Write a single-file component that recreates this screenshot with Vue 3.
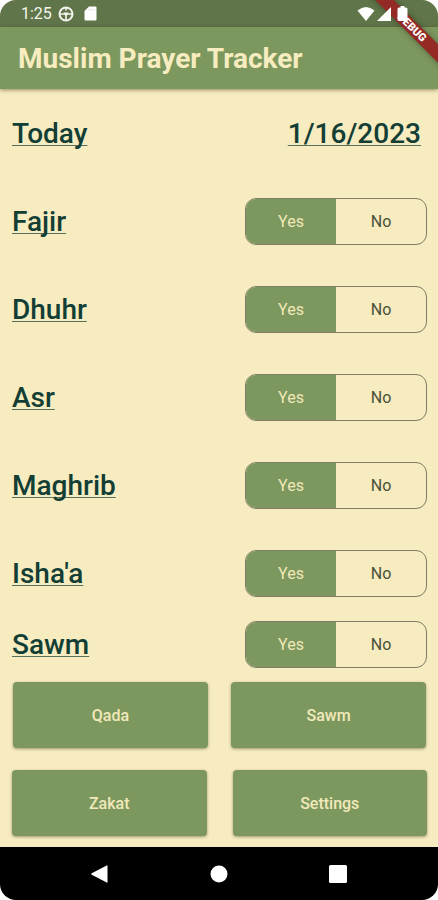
<script setup>
import { reactive } from 'vue'

const prayers = reactive([
  { name: 'Fajir', done: true },
  { name: 'Dhuhr', done: true },
  { name: 'Asr', done: true },
  { name: 'Maghrib', done: true },
  { name: "Isha'a", done: true },
  { name: 'Sawm', done: true }
])
</script>

<template>
  <div class="phone">
    <div class="status">
      <div class="status-left">
        <span class="time">1:25</span>
        <svg class="icon" width="16" height="16" viewBox="0 0 16 16" aria-hidden="true">
          <circle cx="8" cy="8" r="6.500" fill="none" stroke="#f3f5ee" stroke-width="2" />
          <path d="M2 8h12M8 8v6M8 2v2.500" fill="none" stroke="#f3f5ee" stroke-width="1.600" />
          <path d="M5.500 6.500h5L9 9.500H7z" fill="#f3f5ee" />
        </svg>
        <svg class="icon" width="13" height="15" viewBox="0 0 13 15" aria-hidden="true">
          <path d="M5 .5h6.500q1 0 1 1v12q0 1-1 1h-10q-1 0-1-1V5z" fill="#fff" />
          <path d="M5 2.800v1.600M7.500 2.800v1.600M10 2.800v1.600" stroke="#d3dac8" stroke-width="1" />
        </svg>
      </div>
      <div class="status-right">
        <svg width="18" height="16" viewBox="0 0 18 16" aria-hidden="true">
          <path d="M.5 4.600Q9-2.600 17.500 4.600L9 15z" fill="#fff" />
        </svg>
        <svg width="14" height="16" viewBox="0 0 14 16" aria-hidden="true">
          <path d="M14 1v14H0z" fill="#fff" />
        </svg>
        <svg class="battery" width="11" height="16" viewBox="0 0 11 16" aria-hidden="true">
          <path d="M3.500 0h4v1.600H9q1.500 0 1.500 1.500v10.400q0 1.500-1.500 1.500H2q-1.500 0-1.500-1.500V3.100q0-1.500 1.500-1.500h1.500z" fill="#fff" />
        </svg>
      </div>
    </div>
    <div class="ribbon-corner" aria-hidden="true"><span class="ribbon">DEBUG</span></div>

    <header class="appbar"><h1>Muslim Prayer Tracker</h1></header>

    <main class="content">
      <div class="row">
        <h2 class="label">Today</h2>
        <span class="label date">1/16/2023</span>
      </div>
      <div v-for="p in prayers" :key="p.name" class="row">
        <h2 class="label">{{ p.name }}</h2>
        <div class="toggle" role="group" :aria-label="p.name">
          <button type="button" :class="{ on: p.done }" :aria-pressed="p.done" @click="p.done = true">Yes</button>
          <button type="button" :class="{ on: !p.done }" :aria-pressed="!p.done" @click="p.done = false">No</button>
        </div>
      </div>
      <div class="actions inset">
        <button type="button">Qada</button>
        <button type="button">Sawm</button>
      </div>
      <div class="actions">
        <button type="button">Zakat</button>
        <button type="button">Settings</button>
      </div>
    </main>

    <nav class="navbar">
      <button type="button" aria-label="Back">
        <svg width="20" height="20" viewBox="0 0 20 20"><path d="M17.500 1.800v16.400q0 .8-.8.400L1.700 10.700q-1-.7 0-1.400L16.700 1.400q.8-.4.8.4z" fill="#fff" /></svg>
      </button>
      <button type="button" aria-label="Home">
        <svg width="20" height="20" viewBox="0 0 20 20"><circle cx="10" cy="10" r="8.500" fill="#fff" /></svg>
      </button>
      <button type="button" aria-label="Recent apps">
        <svg width="20" height="20" viewBox="0 0 20 20"><rect x="1" y="1" width="18" height="18" rx="1.500" fill="#fff" /></svg>
      </button>
    </nav>
  </div>
</template>

<style>
body {
  margin: 0;
  background: #fff;
}
</style>

<style scoped>
.phone {
  position: relative;
  display: flex;
  flex-direction: column;
  min-height: 100vh;
  overflow: hidden;
  border-radius: 16px;
  background: #f7ecbf;
  font-family: Roboto, sans-serif;
}
button {
  margin: 0;
  padding: 0;
  border: 0;
  background: none;
  font-family: inherit;
  cursor: pointer;
}
.status {
  display: flex;
  justify-content: space-between;
  align-items: center;
  height: 27px;
  padding: 0 30px 0 21px;
  background: #607549;
}
.status-left,
.status-right {
  display: flex;
  align-items: center;
}
.time {
  margin-right: 6px;
  color: #f3f5ee;
  font-size: 16px;
}
.icon {
  margin-right: 10px;
}
.status-right {
  position: relative;
  z-index: 3;
  gap: 2px;
}
.battery {
  margin-left: 4px;
}
.ribbon-corner {
  position: absolute;
  z-index: 2;
  top: 0;
  right: 0;
  width: 90px;
  height: 90px;
  overflow: hidden;
  pointer-events: none;
}
.ribbon {
  position: absolute;
  top: 21px;
  right: -44px;
  width: 140px;
  height: 13px;
  background: #932a26;
  box-shadow: 0 0 6px rgba(0, 0, 0, 0.35);
  color: #fff;
  font-size: 11px;
  font-weight: 900;
  line-height: 13px;
  text-align: center;
  transform: rotate(45deg);
}
.appbar {
  position: relative;
  display: flex;
  align-items: center;
  height: 62px;
  padding: 0 18px;
  background: #7d985e;
  box-shadow: 0 1px 4px rgba(70, 60, 20, 0.55);
}
h1 {
  margin: 0;
  color: #f7ecbf;
  font-size: 28px;
  font-weight: 700;
}
.content {
  flex: 1;
  padding: 0 11px 11px 12px;
}
.row {
  display: flex;
  justify-content: space-between;
  align-items: center;
  height: 88px;
}
.row:nth-child(7) {
  height: 54px;
}
.label {
  margin: 0;
  color: #123e35;
  font-size: 28px;
  font-weight: 500;
  text-decoration: underline;
  text-decoration-color: #56705a;
  text-decoration-thickness: 1px;
  text-underline-offset: 2px;
  text-decoration-skip-ink: none;
}
.date {
  margin-right: 6px;
}
.toggle {
  display: flex;
  box-sizing: border-box;
  width: 182px;
  height: 47px;
  overflow: hidden;
  border: 1px solid #7f7b66;
  border-radius: 11px;
}
.toggle button {
  flex: 1;
  color: #48513b;
  font-size: 16px;
}
.toggle button.on {
  background: #7d985e;
  color: #f1e9ba;
}
.actions {
  display: grid;
  grid-template-columns: 1fr 1fr;
  gap: 26px;
  margin-top: 22px;
}
.actions.inset {
  gap: 23px;
  margin: 11px 1px 0;
}
.actions button {
  height: 66px;
  border-radius: 4px;
  background: #7d985e;
  box-shadow: 0 1px 3px rgba(70, 70, 30, 0.5);
  color: #f1e9ba;
  font-size: 16px;
  font-weight: 500;
}
.navbar {
  display: flex;
  justify-content: center;
  align-items: center;
  gap: 99px;
  height: 53px;
  background: #000;
}
.navbar button {
  display: flex;
}
</style>
